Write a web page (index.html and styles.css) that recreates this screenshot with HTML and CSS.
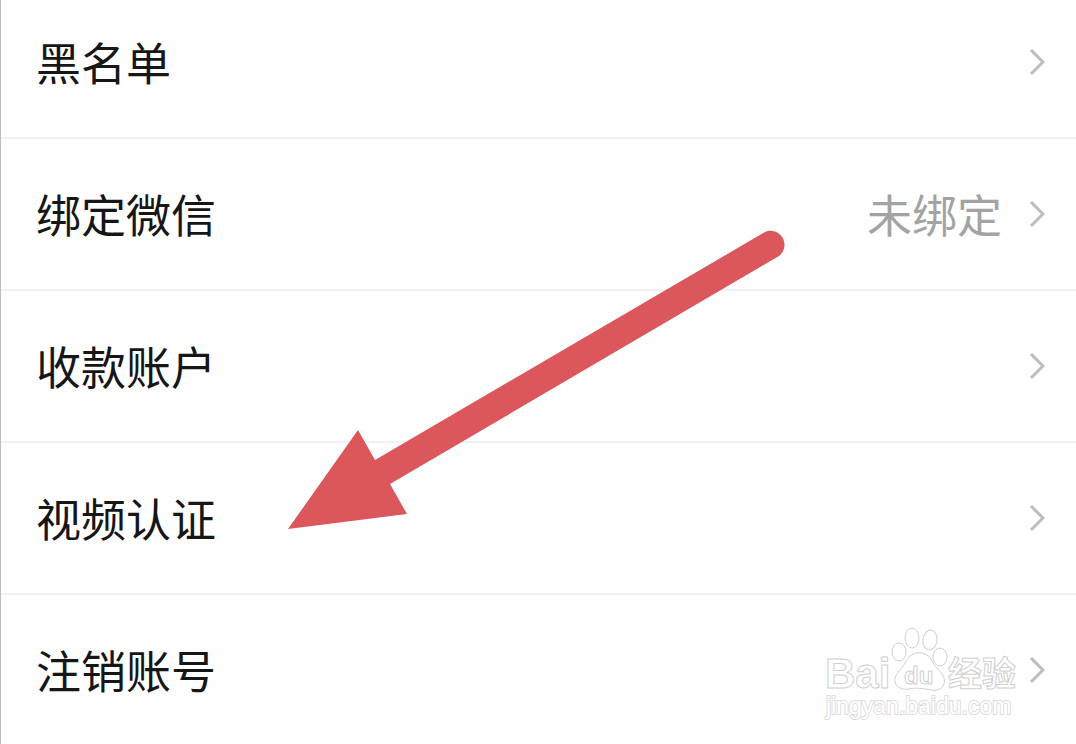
FILE: index.html
```
<!DOCTYPE html>
<html lang="zh-CN">
<head>
    <meta charset="UTF-8">
    <meta name="viewport" content="width=device-width, initial-scale=1.0">
    <title>账号设置</title>
    <link rel="stylesheet" href="styles.css">
</head>
<body>
    <main class="settings">
        <nav class="list">
            <a class="row" href="#blacklist">
                <span class="label">黑名单</span>
                <svg class="chevron" viewBox="0 0 16 28" aria-hidden="true"><path d="M2 2l12 12L2 26"/></svg>
            </a>
            <a class="row" href="#wechat">
                <span class="label">绑定微信</span>
                <span class="value">未绑定</span>
                <svg class="chevron" viewBox="0 0 16 28" aria-hidden="true"><path d="M2 2l12 12L2 26"/></svg>
            </a>
            <a class="row" href="#payment">
                <span class="label">收款账户</span>
                <svg class="chevron" viewBox="0 0 16 28" aria-hidden="true"><path d="M2 2l12 12L2 26"/></svg>
            </a>
            <a class="row" href="#video">
                <span class="label">视频认证</span>
                <svg class="chevron" viewBox="0 0 16 28" aria-hidden="true"><path d="M2 2l12 12L2 26"/></svg>
            </a>
            <a class="row" href="#cancel">
                <span class="label">注销账号</span>
                <svg class="chevron" viewBox="0 0 16 28" aria-hidden="true"><path d="M2 2l12 12L2 26"/></svg>
            </a>
        </nav>

        <!-- arrow pointing at 视频认证 -->
        <svg class="arrow" viewBox="0 0 500 302" aria-hidden="true">
            <path d="M0 300L70 201L87 231L477 3A14 14 0 0 1 491 27L102 255L119 285Z"/>
        </svg>

        <svg class="watermark" viewBox="0 0 204 104" role="img" aria-label="Baidu 经验">
            <text class="mark-latin" x="5" y="68">Bai</text>
            <ellipse cx="79" cy="32" rx="7" ry="9"/>
            <ellipse cx="92" cy="18" rx="7" ry="10"/>
            <ellipse cx="110" cy="20" rx="7" ry="10" transform="rotate(8 110 20)"/>
            <ellipse cx="120" cy="37" rx="7" ry="9"/>
            <path d="M86 41C92 30 107 30 112 41C114 46 119 49 122 54C128 63 122 72 112 70C105 69 96 67 89 69C78 71 71 62 77 54C80 49 84 46 86 41Z"/>
            <text class="mark-du" x="84" y="64">du</text>
            <text class="mark-cn" x="128" y="66">经验</text>
            <text class="mark-url" x="6" y="94">jingyan.baidu.com</text>
        </svg>
    </main>
</body>
</html>
```
FILE: styles.css
```
body {
    margin: 0;
    background: #fefefe;
    color: #161616;
    font-family: "Noto Sans CJK SC", sans-serif;
    overflow: hidden;
}
.settings {
    position: relative;
    border-left: 1px solid #bdbdbd;
    overflow: hidden;
}
/* the list is scrolled a little, so the first row is cut at the top */
.list {
    margin-top: -13px;
}
.row {
    display: flex;
    align-items: center;
    box-sizing: border-box;
    height: 152px;
    padding: 0 31px 0 35px;
    border-bottom: 2px solid #f2f2f2;
    color: inherit;
    font-size: 45px;
    line-height: 64px;
    text-decoration: none;
}
.label {
    flex: 1;
}
.value {
    margin-right: 27px;
    color: #a3a3a3;
}
.chevron {
    width: 16px;
    height: 28px;
    fill: none;
    stroke: #bcbcbc;
    stroke-width: 3;
}
.arrow {
    position: absolute;
    top: 229px;
    left: 287px;
    width: 500px;
    height: 302px;
    fill: #db575c;
}
.watermark {
    position: absolute;
    right: 52px;
    top: 620px;
    width: 204px;
    height: 104px;
    fill: #fff;
    stroke: #d0d0d0;
    stroke-width: 1;
}
.mark-latin,
.mark-du {
    font-family: "Liberation Sans", sans-serif;
    font-weight: bold;
    font-size: 42px;
}
.mark-du {
    font-size: 24px;
}
.mark-cn {
    font-weight: bold;
    font-size: 34px;
}
.mark-url {
    font-family: "Liberation Sans", sans-serif;
    font-size: 23px;
    stroke: #dedede;
    stroke-width: 2;
    paint-order: stroke;
}
```
